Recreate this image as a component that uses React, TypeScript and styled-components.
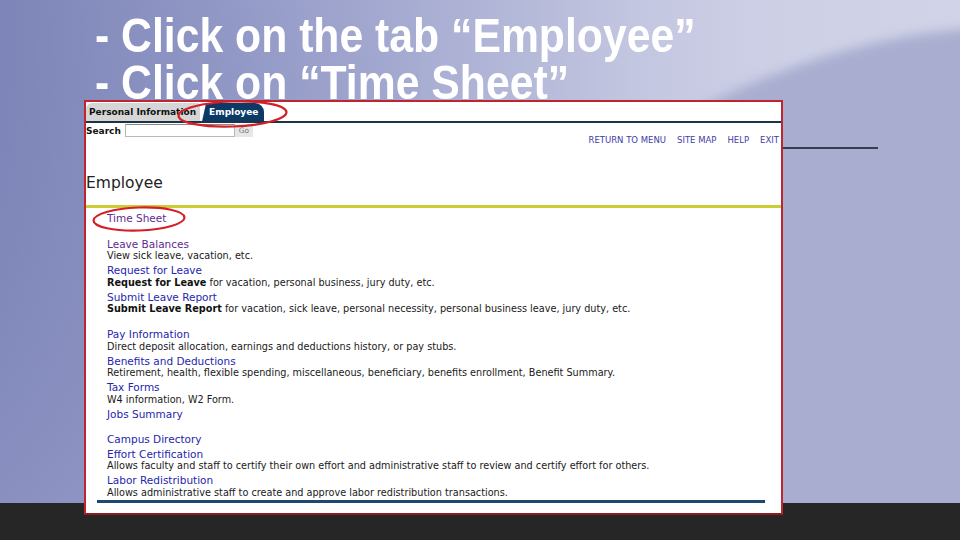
import React from "react";
import styled, { createGlobalStyle } from "styled-components";

const GlobalStyle = createGlobalStyle`
  html, body { margin: 0; padding: 0; }
  body {
    width: 960px;
    height: 540px;
    overflow: hidden;
    font-family: "DejaVu Sans", Verdana, sans-serif;
  }
`;

const Slide = styled.div`
  position: relative;
  width: 960px;
  height: 540px;
  overflow: hidden;
  display: flex;
  flex-direction: column;
  background: linear-gradient(90deg, #7d85b8 0%, #939ac7 25%, #adb2d5 48%, #c3c6e0 66%, #ced1e6 82%, #d1d4e8 100%);
`;

const Backdrop = styled.svg`
  position: absolute;
  inset: 0;
  z-index: 0;
`;

const BottomBar = styled.div`
  position: absolute;
  left: 0;
  right: 0;
  bottom: 0;
  height: 37px;
  background: #262626;
  z-index: 1;
`;

const DecoLine = styled.div`
  position: absolute;
  left: 700px;
  top: 147px;
  width: 178px;
  height: 2px;
  background: #3a3d51;
  z-index: 1;
`;

const Title = styled.h1`
  position: relative;
  z-index: 1;
  margin: 12px 0 0 95px;
  font-family: "Liberation Sans", Arial, sans-serif;
  font-weight: 700;
  font-size: 48px;
  line-height: 47px;
  color: #ffffff;
  white-space: nowrap;
  transform: scaleX(0.89);
  transform-origin: left top;
`;

const TitleLine = styled.div``;

const Frame = styled.div`
  position: relative;
  z-index: 2;
  margin: -6px 0 0 84px;
  width: 699px;
  height: 415px;
  box-sizing: border-box;
  border: 2px solid #c0252d;
  border-bottom-color: #8e1a1f;
  background: #ffffff;
  display: flex;
  flex-direction: column;
`;

const TabBar = styled.div`
  display: flex;
  align-items: flex-end;
  gap: 2px;
  height: 19px;
  border-bottom: 2px solid #1c3443;
`;

const Tab = styled.div<{ $active?: boolean }>`
  height: 18px;
  display: flex;
  align-items: center;
  box-sizing: border-box;
  font-size: 9px;
  font-weight: 700;
  white-space: nowrap;
  ${(p) =>
    p.$active
      ? `
    background: #0d3966;
    color: #ffffff;
    padding: 0 6px 0 7px;
    border-radius: 2px 9px 0 0;
    clip-path: polygon(4px 0, 100% 0, 100% 100%, 0 100%);
  `
      : `
    background: #d6d6d6;
    color: #111111;
    padding: 0 4px 0 3px;
    border-radius: 6px 3px 0 0;
  `}
`;

const SearchRow = styled.div`
  display: flex;
  align-items: center;
  height: 13px;
  margin-top: 1px;
`;

const SearchLabel = styled.span`
  font-size: 9px;
  font-weight: 700;
  color: #111;
  margin-right: 4px;
`;

const SearchInput = styled.div`
  width: 110px;
  height: 13px;
  box-sizing: border-box;
  border: 1px solid #b8b8b8;
  border-top-color: #8a8a8a;
  background: #fff;
`;

const GoButton = styled.div`
  width: 18px;
  height: 13px;
  background: #e6e6e6;
  color: #777;
  font-size: 7.5px;
  display: flex;
  align-items: center;
  justify-content: center;
`;

const TopLinks = styled.nav`
  display: flex;
  justify-content: flex-end;
  gap: 11px;
  margin-top: -2px;
  padding-right: 2px;
  line-height: 10px;
`;

const TopLink = styled.span`
  font-size: 8.5px;
  color: #4040a8;
`;

const Heading = styled.h2`
  margin: 29px 0 0 0;
  font-size: 15.5px;
  line-height: 18px;
  font-weight: 400;
  color: #222;
`;

const YellowRule = styled.div`
  margin-top: 13px;
  height: 3px;
  background: #cccc33;
`;

const List = styled.div`
  display: flex;
  flex-direction: column;
  gap: 13px;
  padding: 4px 0 0 21px;
`;

const Group = styled.div`
  display: flex;
  flex-direction: column;
  gap: 2px;
`;

const Item = styled.div`
  display: flex;
  flex-direction: column;
`;

const ItemLink = styled.a<{ $visited?: boolean }>`
  font-size: 10.5px;
  line-height: 12.5px;
  color: ${(p) => (p.$visited ? "#5e2b92" : "#2626ad")};
  text-decoration: none;
  white-space: nowrap;
`;

const ItemDesc = styled.div`
  font-size: 9.7px;
  line-height: 12px;
  color: #1a1a1a;
  white-space: nowrap;
  b { font-weight: 700; color: #111; }
`;

const BottomRule = styled.div`
  margin: 1px 16px 0 11px;
  height: 3px;
  background: #1f4870;
`;

const Annotations = styled.svg`
  position: absolute;
  inset: 0;
  z-index: 3;
  pointer-events: none;
`;

type Entry = { title: string; desc?: React.ReactNode; visited?: boolean };

const groups: Entry[][] = [
  [{ title: "Time Sheet", visited: true }],
  [
    { title: "Leave Balances", visited: true, desc: "View sick leave, vacation, etc." },
    {
      title: "Request for Leave",
      desc: (
        <>
          <b>Request for Leave</b> for vacation, personal business, jury duty, etc.
        </>
      ),
    },
    {
      title: "Submit Leave Report",
      desc: (
        <>
          <b>Submit Leave Report</b> for vacation, sick leave, personal necessity, personal business leave, jury duty, etc.
        </>
      ),
    },
  ],
  [
    { title: "Pay Information", desc: "Direct deposit allocation, earnings and deductions history, or pay stubs." },
    {
      title: "Benefits and Deductions",
      desc: "Retirement, health, flexible spending, miscellaneous, beneficiary, benefits enrollment, Benefit Summary.",
    },
    { title: "Tax Forms", desc: "W4 information, W2 Form." },
    { title: "Jobs Summary" },
  ],
  [
    { title: "Campus Directory" },
    {
      title: "Effort Certification",
      desc: "Allows faculty and staff to certify their own effort and administrative staff to review and certify effort for others.",
    },
    {
      title: "Labor Redistribution",
      desc: "Allows administrative staff to create and approve labor redistribution transactions.",
    },
  ],
];

export default function App() {
  return (
    <>
      <GlobalStyle />
      <Slide>
        <Backdrop width="960" height="540" viewBox="0 0 960 540">
          <defs>
            <filter id="soft" x="-10%" y="-10%" width="120%" height="120%">
              <feGaussianBlur stdDeviation="6" />
            </filter>
            <linearGradient id="leftShade" x1="0" y1="0" x2="0" y2="1">
              <stop offset="0" stopColor="#7a82b6" stopOpacity="0" />
              <stop offset="1" stopColor="#9aa0cc" stopOpacity="0.5" />
            </linearGradient>
          </defs>
          <rect x="0" y="0" width="420" height="540" fill="url(#leftShade)" />
          <path
            d="M 980 28 C 880 32, 760 70, 660 130 C 600 170, 560 210, 530 260 L 530 560 L 980 560 Z"
            fill="#a9aed0"
            filter="url(#soft)"
          />
        </Backdrop>
        <BottomBar />
        <DecoLine />
        <Title>
          <TitleLine>- Click on the tab “Employee”</TitleLine>
          <TitleLine>- Click on “Time Sheet”</TitleLine>
        </Title>
        <Frame>
          <TabBar>
            <Tab>Personal Information</Tab>
            <Tab $active>Employee</Tab>
          </TabBar>
          <SearchRow>
            <SearchLabel>Search</SearchLabel>
            <SearchInput />
            <GoButton>Go</GoButton>
          </SearchRow>
          <TopLinks>
            <TopLink>RETURN TO MENU</TopLink>
            <TopLink>SITE MAP</TopLink>
            <TopLink>HELP</TopLink>
            <TopLink>EXIT</TopLink>
          </TopLinks>
          <Heading>Employee</Heading>
          <YellowRule />
          <List>
            {groups.map((g, gi) => (
              <Group key={gi}>
                {g.map((e) => (
                  <Item key={e.title}>
                    <ItemLink $visited={e.visited}>{e.title}</ItemLink>
                    {e.desc && <ItemDesc>{e.desc}</ItemDesc>}
                  </Item>
                ))}
              </Group>
            ))}
          </List>
          <BottomRule />
        </Frame>
        <Annotations width="960" height="540" viewBox="0 0 960 540">
          <ellipse cx="232.5" cy="114" rx="54" ry="12.5" fill="none" stroke="#d41f27" strokeWidth="2.2" transform="rotate(-2 232.5 114)" />
          <ellipse cx="139" cy="219" rx="45.5" ry="11.5" fill="none" stroke="#d41f27" strokeWidth="2.2" transform="rotate(-2 139 219)" />
        </Annotations>
      </Slide>
    </>
  );
}
